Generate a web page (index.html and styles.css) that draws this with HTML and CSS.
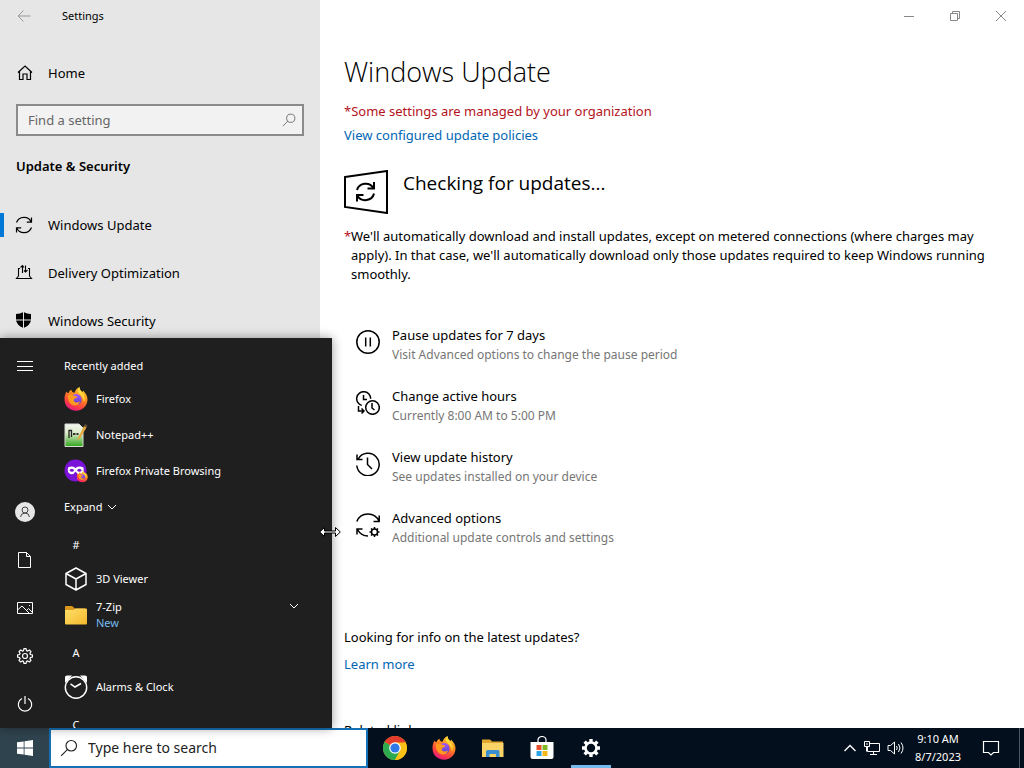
FILE: index.html
```html
<!DOCTYPE html>
<html lang="en">
<head>
    <meta charset="UTF-8">
    <meta name="viewport" content="width=device-width, initial-scale=1.0">
    <title>Settings - Windows Update</title>
    <link rel="stylesheet" href="styles.css">
</head>
<body>
    <!-- Shared icons -->
    <svg class="sprite" aria-hidden="true">
        <defs>
            <linearGradient id="foxBody" x1="0.8" y1="0" x2="0.3" y2="1">
                <stop offset="0" stop-color="#ffe03a"/>
                <stop offset="0.4" stop-color="#ff8a1e"/>
                <stop offset="0.75" stop-color="#ff4040"/>
                <stop offset="1" stop-color="#e31587"/>
            </linearGradient>
            <linearGradient id="foxGlobe" x1="0" y1="0" x2="0" y2="1">
                <stop offset="0" stop-color="#a259ff"/>
                <stop offset="1" stop-color="#5b3fc4"/>
            </linearGradient>
            <linearGradient id="noteGreen" x1="0" y1="0" x2="0" y2="1">
                <stop offset="0" stop-color="#f4f6f2"/>
                <stop offset="0.4" stop-color="#dcebc8"/>
                <stop offset="1" stop-color="#2fa51c"/>
            </linearGradient>
            <linearGradient id="folderYellow" x1="0" y1="0" x2="1" y2="1">
                <stop offset="0" stop-color="#ffdf6b"/>
                <stop offset="1" stop-color="#f3b92c"/>
            </linearGradient>
        </defs>
        <symbol id="firefox" viewBox="0 0 24 24">
            <path fill="url(#foxBody)" d="M2.500 4.500 C3 6 3.500 6 4.500 6 C5 4.500 6 3.500 7.500 2.800 C7.500 4.500 8.500 5.500 10.500 5.800 C11.500 3 13 1 15.500 0 C15.500 2.500 17 3.500 18.500 5 C19 4.500 19 4 19 3.500 C22 6.500 23.700 9.500 23.500 13 C23 19.500 18 23.700 12 23.700 C5.500 23.700 .6 19 .5 12.500 C.4 9.500 1.200 6.800 2.500 4.500 Z"/>
            <circle cx="12" cy="12.500" r="5.600" fill="url(#foxGlobe)"/>
            <path fill="#ff9a1f" d="M4 8 C6.500 6.800 9 7.800 10.500 9 C12 8.800 13 9.500 13.300 10.300 C12.500 11.500 10.500 11 9.800 12.500 C9.300 14 10.500 15.500 12.500 15.500 C14 15.500 15 14.800 15.800 14.500 C15.500 17.500 12.500 19 10 18.500 C6 17.800 3.500 13.500 4 8 Z"/>
            <path fill="#ffd83a" d="M15.500 0 C15.300 3 18 5 19.600 7.600 C21 10 21 13 20 15.500 C19.500 11 17.500 8 15 6.500 C13 5 14 1.500 15.500 0 Z"/>
        </symbol>
        <symbol id="chevron" viewBox="0 0 10 10">
            <path d="M1 3 L5 7 L9 3" fill="none" stroke="currentColor"/>
        </symbol>
        <symbol id="search" viewBox="0 0 16 16">
            <circle cx="10" cy="6" r="4.700" fill="none" stroke="currentColor"/>
            <path d="M6.700 9.300 L1 15" fill="none" stroke="currentColor"/>
        </symbol>
        <symbol id="gear" viewBox="0 0 16 16">
            <path d="M6.900 .6 h2.200 l.4 2 1.200 .5 1.700 -1.100 1.600 1.600 -1.100 1.700 .5 1.200 2 .4 v2.200 l-2 .4 -.5 1.200 1.100 1.700 -1.600 1.600 -1.700 -1.100 -1.200 .5 -.4 2 h-2.200 l-.4 -2 -1.200 -.5 -1.700 1.100 -1.600 -1.600 1.100 -1.700 -.5 -1.200 -2 -.4 v-2.200 l2 -.4 .5 -1.200 -1.100 -1.700 1.600 -1.600 1.700 1.100 1.200 -.5 z" fill="none" stroke="currentColor" stroke-width="1.200" stroke-linejoin="round"/>
            <circle cx="8" cy="8" r="2.500" fill="none" stroke="currentColor" stroke-width="1.200"/>
        </symbol>
    </svg>

    <div class="settings">
        <aside class="sidebar">
            <div class="titlebar">
                <button class="back" aria-label="Back">
                    <svg width="14" height="12" viewBox="0 0 14 12"><path d="M13.500 6 H1 M6.500 .5 L1 6 L6.500 11.500" fill="none" stroke="currentColor"/></svg>
                </button>
                <span class="app-name">Settings</span>
            </div>

            <a class="nav-item home" href="#">
                <svg width="16" height="16" viewBox="0 0 16 16"><path d="M1 7.500 L8 1 L15 7.500 M2.500 6.500 V14.500 H6 V9 H10 V14.500 H13.500 V6.500" fill="none" stroke="currentColor" stroke-width="1.200"/></svg>
                Home
            </a>

            <div class="find">
                <input type="text" placeholder="Find a setting" aria-label="Find a setting">
                <svg width="14" height="14"><use href="#search"/></svg>
            </div>

            <h2>Update &amp; Security</h2>

            <nav>
                <a class="nav-item active" href="#">
                    <svg width="18" height="18" viewBox="0 0 18 18"><path d="M1.500 6.500 A8 8 0 0 1 16.300 6 M16.500 1.500 V6.200 H11.800 M16.500 11.500 A8 8 0 0 1 1.700 12 M1.500 16.500 V11.800 H6.200" fill="none" stroke="currentColor" stroke-width="1.200"/></svg>
                    Windows Update
                </a>
                <a class="nav-item" href="#">
                    <svg width="18" height="18" viewBox="0 0 18 18"><path d="M5 4.500 H3.500 V12.500 M13 4.500 H14.500 V12.500 M3.500 12 L1.500 14.500 H16.500 L14.500 12 M7.500 9 V1.500 M5.500 3.500 L7.500 1.500 L9 3.500 M10.500 1.500 V8 M9 6.500 L10.500 8 L12.500 6" fill="none" stroke="currentColor" stroke-width="1.100"/></svg>
                    Delivery Optimization
                </a>
                <a class="nav-item" href="#">
                    <svg width="18" height="18" viewBox="0 0 18 18"><path d="M8.500 0 Q12 2 16 2 V8 Q15.500 13 8.500 16 Q1.500 13 1 8 V2 Q5 2 8.500 0 Z"/><path d="M8.500 0 V17 M0 8 H17" stroke="#e6e6e6"/></svg>
                    Windows Security
                </a>
            </nav>
        </aside>

        <main class="content">
            <div class="window-controls">
                <button aria-label="Minimize"><svg width="12" height="12" viewBox="0 0 12 12"><path d="M1 6.500 H11" stroke="currentColor"/></svg></button>
                <button aria-label="Restore"><svg width="12" height="12" viewBox="0 0 12 12"><path d="M1.500 3.500 H8.500 V10.500 H1.500 Z M3.500 3 V1.500 H10.500 V8.500 H9" fill="none" stroke="currentColor"/></svg></button>
                <button aria-label="Close"><svg width="12" height="12" viewBox="0 0 12 12"><path d="M1 1 L11 11 M11 1 L1 11" stroke="currentColor"/></svg></button>
            </div>

            <h1>Windows Update</h1>
            <p class="managed">*Some settings are managed by your organization</p>
            <a class="link" href="#">View configured update policies</a>

            <div class="checking">
                <svg width="44" height="44" viewBox="0 0 44 44" fill="none" stroke="#000" stroke-width="2">
                    <path d="M1 7 L43 1 V43 L1 37 Z"/>
                    <path d="M13 20 A9 8.500 0 0 1 29.500 18 M30 12 V18.500 H23.500 M30 23.500 A9 8.500 0 0 1 13.500 26 M13 31.500 V25 H19.500"/>
                </svg>
                <h3>Checking for updates...</h3>
            </div>

            <p class="notice"><span class="star">*</span><span>We'll automatically download and install updates, except on metered connections (where charges may apply). In that case, we'll automatically download only those updates required to keep Windows running smoothly.</span></p>

            <div class="options">
                <a class="option" href="#">
                    <svg width="24" height="24" viewBox="0 0 24 24" fill="none" stroke="currentColor" stroke-width="1.500"><circle cx="12" cy="12" r="11.200"/><path d="M9.700 7.500 V16.500 M14.300 7.500 V16.500"/></svg>
                    <span>Pause updates for 7 days<small>Visit Advanced options to change the pause period</small></span>
                </a>
                <a class="option" href="#">
                    <svg width="24" height="24" viewBox="0 0 24 24" fill="none" stroke="currentColor" stroke-width="1.500"><path d="M5.800 14.400 A7 7 0 1 1 14.700 7.700 M7.500 4 V8.500 H11"/><circle cx="16.500" cy="16.500" r="6.800"/><path d="M16 12 V17 L18.500 19 M2.500 15 V20 H8 M5.500 17.500 L8 20 L5.500 22.500"/></svg>
                    <span>Change active hours<small>Currently 8:00 AM to 5:00 PM</small></span>
                </a>
                <a class="option" href="#">
                    <svg width="24" height="24" viewBox="0 0 24 24" fill="none" stroke="currentColor" stroke-width="1.500"><path d="M2.200 7 A11.200 11.200 0 1 1 .8 13.500 M1 2.500 V7.500 H6.500 M11.500 5.500 V12.500 L16 17"/></svg>
                    <span>View update history<small>See updates installed on your device</small></span>
                </a>
                <a class="option" href="#">
                    <svg width="24" height="24" viewBox="0 0 24 24" fill="none" stroke="currentColor" stroke-width="1.500"><path d="M.8 8.500 A12 12 0 0 1 23 8.300 M23.200 2.500 V8.500 H17.500 M1 21.500 V16 H6.500 M1.500 16.500 Q5 23 12 23"/><circle cx="18.500" cy="19" r="3"/><path d="M18.500 14 V16 M18.500 22 V24 M13.500 19 H15.500 M21.500 19 H23.500 M15 15.500 L16.400 16.900 M20.600 21.100 L22 22.500 M22 15.500 L20.600 16.900 M16.400 21.100 L15 22.500"/></svg>
                    <span>Advanced options<small>Additional update controls and settings</small></span>
                </a>
            </div>

            <p class="info">Looking for info on the latest updates?</p>
            <a class="link" href="#">Learn more</a>
            <p class="related">Related links</p>
        </main>
    </div>

    <div class="start-menu">
        <div class="rail">
            <button class="menu" aria-label="Menu"><svg width="16" height="16" viewBox="0 0 16 16"><path d="M0 3.500 H16 M0 8.500 H16 M0 12.500 H16" stroke="currentColor"/></svg></button>
            <button aria-label="Account"><svg width="20" height="20" viewBox="0 0 20 20"><circle cx="10" cy="10" r="10" fill="#e6e6e6"/><g fill="none" stroke="#444"><circle cx="10" cy="8" r="3"/><path d="M5.500 15 Q6 11 10 11 Q14 11 14.500 15"/></g></svg></button>
            <button aria-label="Documents"><svg width="16" height="16" viewBox="0 0 16 16"><path d="M1.500 .5 H9.500 L13.500 4.500 V15.500 H1.500 Z M9.500 .5 V4.500 H13.500" fill="none" stroke="currentColor"/></svg></button>
            <button aria-label="Pictures"><svg width="16" height="16" viewBox="0 0 16 16"><path d="M.5 2.500 H15.500 V13.500 H.5 Z M.5 10 L5 6 L12 13 M9.500 10.500 L11.500 8.500 L15.500 12.500 M12 5.500 H13" fill="none" stroke="currentColor"/></svg></button>
            <button aria-label="Settings"><svg width="16" height="16"><use href="#gear"/></svg></button>
            <button aria-label="Power"><svg width="16" height="16" viewBox="0 0 16 16"><path d="M5 2.500 A6.700 6.700 0 1 0 11 2.500 M8 0 V8" fill="none" stroke="currentColor" stroke-width="1.200"/></svg></button>
        </div>

        <div class="apps">
            <h4>Recently added</h4>
            <a class="app" href="#"><svg width="24" height="24"><use href="#firefox"/></svg>Firefox</a>
            <a class="app" href="#">
                <svg width="24" height="24" viewBox="0 0 24 24">
                    <path d="M1 1 H15 L19 5 V23.500 H1 Z" fill="url(#noteGreen)" stroke="#d5dccf"/>
                    <path d="M5 15 V7.500 H7.500 V14" fill="none" stroke="#222" stroke-width="1.300"/>
                    <path d="M9 11 H11.500 M12.500 11 H14.500" stroke="#333" stroke-width="2"/>
                    <path d="M13 17 L20 3 L22.500 4.500 L15.500 16 Z" fill="#e8a83c"/>
                    <path d="M20 3 L21 1 L23.500 2.500 L22.500 4.500 Z" fill="#6b5139"/>
                </svg>Notepad++</a>
            <a class="app" href="#">
                <svg width="24" height="24" viewBox="0 0 24 24">
                    <circle cx="11.500" cy="11.500" r="11" fill="#7a12d8"/>
                    <path d="M4 8.500 Q8 6.500 11.500 9 Q15 6.500 19.500 8.500 Q20.500 14 17 15 Q13.500 16 11.500 12.500 Q9.500 16 6.500 15 Q3 14 4 8.500 Z" fill="#fff"/>
                    <ellipse cx="7.800" cy="11.300" rx="2" ry="1.500" fill="#7a12d8"/><ellipse cx="15.400" cy="11.300" rx="2" ry="1.500" fill="#7a12d8"/>
                    <use href="#firefox" x="12.500" y="12" width="11.500" height="11.500"/>
                </svg>Firefox Private Browsing</a>
            <button class="expand">Expand <svg width="10" height="10"><use href="#chevron"/></svg></button>
            <h5>#</h5>
            <a class="app" href="#">
                <svg width="24" height="24" viewBox="0 0 24 24"><path d="M12 1 L22 6.500 V17.500 L12 23 L2 17.500 V6.500 Z M2 6.500 L12 12 L22 6.500 M12 12 V23" fill="none" stroke="#fff" stroke-width="1.500" stroke-linejoin="round"/></svg>3D Viewer</a>
            <a class="app folder" href="#">
                <svg width="24" height="24" viewBox="0 0 24 24"><path d="M1 4 Q1 3 2 3 H8 L11 5.500 H21 V8 H1 Z" fill="#d9981b"/><path d="M1 7 H9 L12 5.500 H22 Q23 5.500 23 6.500 V20 Q23 21.500 22 21.500 H2 Q1 21.500 1 20 Z" fill="url(#folderYellow)"/></svg>
                <span>7-Zip<small>New</small></span>
                <svg class="fold" width="10" height="10"><use href="#chevron"/></svg>
            </a>
            <h5>A</h5>
            <a class="app" href="#">
                <svg width="24" height="24" viewBox="0 0 24 24"><path d="M1 8 V2 Q1 .5 3 .5 H8 Z M23 8 V2 Q23 .5 21 .5 H16 Z" fill="#fff"/><circle cx="12" cy="12.500" r="10.700" fill="#1f1f1f" stroke="#fff" stroke-width="1.400"/><path d="M6.500 8.800 L11 12 L17 8.500" fill="none" stroke="#fff" stroke-width="1.500"/></svg>Alarms &amp; Clock</a>
            <h5>C</h5>
        </div>

        <svg class="cursor" width="22" height="12" viewBox="0 0 22 12"><path d="M.7 6 L5.500 1.500 V5 H16.500 V1.500 L21.300 6 L16.500 10.500 V7 H5.500 V10.500 Z" fill="#fff" stroke="#000"/></svg>
    </div>

    <footer class="taskbar">
        <button class="start" aria-label="Start"><svg width="16" height="16" viewBox="0 0 16 16"><path d="M0 2.300 L6.700 1.400 V7.500 H0 Z M7.500 1.300 L16 0 V7.500 H7.500 Z M0 8.500 H6.700 V14.600 L0 13.700 Z M7.500 8.500 H16 V16 L7.500 14.700 Z" fill="#fff"/></svg></button>
        <div class="search">
            <svg width="18" height="18"><use href="#search"/></svg>
            <input type="text" placeholder="Type here to search" aria-label="Type here to search">
        </div>
        <div class="pinned">
            <button aria-label="Google Chrome">
                <svg width="24" height="24" viewBox="0 0 24 24">
                    <circle cx="12" cy="12" r="12" fill="#fbc116"/>
                    <path d="M12 12 L1.600 6 A12 12 0 0 1 22.400 6 Z" fill="#e33b2e"/>
                    <path d="M1.600 6 A12 12 0 0 0 12 24 L17.200 15 L12 12 Z" fill="#2da94f"/>
                    <path d="M12 6.500 H22.400 L22.600 6.500 A12 12 0 0 1 12 24 L17 14.500 Z" fill="#fbc116"/>
                    <circle cx="12" cy="12" r="5.800" fill="#fff"/><circle cx="12" cy="12" r="4.600" fill="#2f78e8"/>
                </svg>
            </button>
            <button aria-label="Firefox"><svg width="24" height="24"><use href="#firefox"/></svg></button>
            <button aria-label="File Explorer">
                <svg width="24" height="24" viewBox="0 0 24 24"><path d="M1 3.500 H9 L11 5.500 H22 V9 H1 Z" fill="#e2a52d"/><path d="M1 7 H22.500 V21 H1 Z" fill="#fbd367"/><path d="M5 21 V15.500 Q5 14 6.500 14 H17 Q18.500 14 18.500 15.500 V21 H15 V18 H8.500 V21 Z" fill="#3b8fd0"/></svg>
            </button>
            <button aria-label="Microsoft Store">
                <svg width="24" height="24" viewBox="0 0 24 24"><path d="M8 7 V4 A4 3.500 0 0 1 16 4 V7" fill="none" stroke="#fff" stroke-width="1.200"/><path d="M.5 6 H23.500 V21 Q23.500 23 21.500 23 H2.500 Q.5 23 .5 21 Z" fill="#fff"/><path d="M6.500 9 H11.500 V14 H6.500 Z" fill="#e8502c"/><path d="M12.500 9 H17.500 V14 H12.500 Z" fill="#7fb927"/><path d="M6.500 15 H11.500 V20 H6.500 Z" fill="#29a3e3"/><path d="M12.500 15 H17.500 V20 H12.500 Z" fill="#f6b71c"/></svg>
            </button>
            <button class="running" aria-label="Settings">
                <svg width="20" height="20" viewBox="0 0 20 20" fill="none" stroke="#fff"><circle cx="10" cy="10" r="5.500" stroke-width="2.600"/><path d="M10 1 V4 M10 16 V19 M1 10 H4 M16 10 H19 M3.600 3.600 L5.800 5.800 M14.200 14.200 L16.400 16.400 M16.400 3.600 L14.200 5.800 M5.800 14.200 L3.600 16.400" stroke-width="3.400"/></svg>
            </button>
        </div>
        <div class="tray">
            <button aria-label="Show hidden icons"><svg width="14" height="14" viewBox="0 0 14 14"><path d="M1.500 10 L7 4.500 L12.500 10" fill="none" stroke="currentColor" stroke-width="1.300"/></svg></button>
            <button aria-label="Network"><svg width="18" height="16" viewBox="0 0 18 16"><path d="M6.500 3.500 H16.500 V11.500 H4.500 V7 M1.500 1.500 H6.500 V6.500 H1.500 Z M3 4 H5 M10.500 11.500 V14.500 M7 14.500 H14 M3.500 6.500 V11.500" fill="none" stroke="currentColor"/></svg></button>
            <button aria-label="Volume"><svg width="18" height="16" viewBox="0 0 18 16"><path d="M1 5.500 H3.500 L7.500 2 V14 L3.500 10.500 H1 Z M9.500 6 Q11 8 9.500 10 M11.500 4 Q14.500 8 11.500 12 M14 2.500 Q18 8 14 13.500" fill="none" stroke="currentColor"/></svg></button>
            <button class="clock">9:10 AM<br>8/7/2023</button>
            <button class="notifications" aria-label="Notifications"><svg width="18" height="18" viewBox="0 0 18 18"><path d="M1.500 2.500 H16.500 V13.500 H11.500 L9 16 L6.500 13.500 H1.500 Z" fill="none" stroke="currentColor" stroke-width="1.200"/></svg></button>
            <button class="show-desktop" aria-label="Show desktop"></button>
        </div>
    </footer>
</body>
</html>
```
FILE: styles.css
```css
* {
    box-sizing: border-box;
}
body {
    margin: 0;
    height: 100vh;
    display: flex;
    flex-direction: column;
    position: relative;
    overflow: hidden;
    background: #fff;
    color: #000;
    font-family: "Noto Sans", "Open Sans", sans-serif;
    font-size: 13px;
    line-height: 20px;
}
h1, h2, h3, h4, h5, p {
    margin: 0;
    font-weight: 400;
}
a {
    color: inherit;
    text-decoration: none;
}
button {
    display: flex;
    align-items: center;
    justify-content: center;
    padding: 0;
    border: none;
    background: none;
    color: inherit;
    font: inherit;
}
svg {
    flex-shrink: 0;
}
small {
    display: block;
}
.sprite {
    position: absolute;
    width: 0;
    height: 0;
}

/* Settings window */
.settings {
    flex: 1;
    min-height: 0;
    display: flex;
}
.sidebar {
    width: 320px;
    flex-shrink: 0;
    background: #e6e6e6;
    overflow: hidden;
}
.titlebar {
    display: flex;
    align-items: center;
    height: 32px;
    font-size: 11px;
}
.back {
    width: 48px;
    height: 32px;
    color: #999;
}
.app-name {
    padding-left: 14px;
}
.nav-item {
    display: flex;
    align-items: center;
    gap: 15px;
    height: 48px;
    padding-left: 15px;
}
.nav-item.home {
    margin: 17px 0 7px;
    padding-left: 17px;
}
.nav-item.active {
    background: linear-gradient(#0078d7, #0078d7) left center / 4px 24px no-repeat;
}
.find {
    display: flex;
    align-items: center;
    height: 32px;
    margin: 0 16px;
    padding: 0 6px 0 10px;
    border: 2px solid #8a8a8a;
    background: #f2f2f2;
    color: #666;
}
.find input,
.search input {
    flex: 1;
    min-width: 0;
    padding: 0;
    border: none;
    outline: none;
    background: none;
    font: inherit;
}
.find input::placeholder {
    color: #666;
    opacity: 1;
}
.sidebar h2 {
    margin: 20px 16px 25px;
    font-size: 13px;
    font-weight: 600;
}

.content {
    flex: 1;
    padding: 0 24px;
    overflow: hidden;
}
.window-controls {
    display: flex;
    justify-content: flex-end;
    height: 32px;
    margin-right: -24px;
    color: #888;
}
.window-controls button {
    width: 46px;
}
h1 {
    margin: 20px 0 9px;
    font-family: "Open Sans", sans-serif;
    font-size: 27px;
    font-weight: 300;
    line-height: 40px;
}
.managed {
    margin-bottom: 4px;
    color: #b5121b;
}
.link {
    display: block;
    color: #0066b4;
}
.checking {
    display: flex;
    gap: 15px;
    margin-top: 25px;
}
.checking h3 {
    font-family: "Open Sans", sans-serif;
    font-size: 19px;
    line-height: 26px;
}
.notice {
    display: flex;
    margin-top: 13px;
    line-height: 19px;
}
.star {
    width: 7px;
    flex-shrink: 0;
    color: #b5121b;
}
.options {
    display: flex;
    flex-direction: column;
    gap: 23px;
    margin: 42px 12px 0;
    line-height: 19px;
}
.option {
    display: flex;
    align-items: flex-start;
    gap: 12px;
}
.option svg {
    margin-top: 4px;
}
.option small {
    color: #767676;
    font-size: 12px;
}
.info {
    margin: 80px 0 7px;
}
.related {
    margin-top: 46px;
}

/* Start menu */
.start-menu {
    position: absolute;
    left: 0;
    bottom: 40px;
    display: flex;
    width: 332px;
    height: 390px;
    background: #1f1f1f;
    color: #fff;
    font-size: 11px;
    line-height: 16px;
    box-shadow: 0 0 10px rgba(0,0,0,0.4);
}
.rail {
    display: flex;
    flex-direction: column;
    width: 50px;
}
.rail button {
    height: 48px;
}
.rail .menu {
    margin: 4px 0 auto;
}
.apps {
    flex: 1;
    padding: 10px 33px 0 14px;
    overflow: hidden;
}
.apps h4 {
    height: 33px;
    font-size: 11px;
    line-height: 36px;
}
.apps h5 {
    width: 24px;
    height: 36px;
    font-size: 11px;
    line-height: 40px;
    text-align: center;
}
.app {
    display: flex;
    align-items: center;
    gap: 8px;
    height: 36px;
}
.app small {
    color: #76b9ed;
    font-size: 11px;
}
.fold {
    align-self: flex-start;
    margin: 4px 0 0 auto;
}
.expand {
    gap: 5px;
    height: 36px;
}
.cursor {
    position: absolute;
    right: -9px;
    bottom: 190px;
}

/* Taskbar */
.taskbar {
    display: flex;
    flex-shrink: 0;
    height: 40px;
    background: #030f1c;
    color: #fff;
}
.start {
    width: 49px;
    background: #2f434e;
}
.search {
    display: flex;
    align-items: center;
    gap: 10px;
    width: 319px;
    padding: 0 9px;
    border: 2px solid #1670b4;
    background: #fff;
    color: #222;
    font-size: 14px;
}
.search input::placeholder {
    color: #222;
    opacity: 1;
}
.pinned {
    display: flex;
    gap: 9px;
    margin-left: 7px;
}
.pinned button {
    width: 40px;
}
.pinned .running {
    border-top: 3px solid transparent;
    border-bottom: 3px solid #76b9ed;
}
.tray {
    display: flex;
    gap: 6px;
    margin-left: auto;
    font-size: 11px;
    line-height: 18px;
}
.clock {
    width: 54px;
    margin-right: 4px;
}
.notifications {
    width: 32px;
    margin-right: 6px;
}
.show-desktop {
    width: 5px;
    border-left: 1px solid #4b5560;
}
```
